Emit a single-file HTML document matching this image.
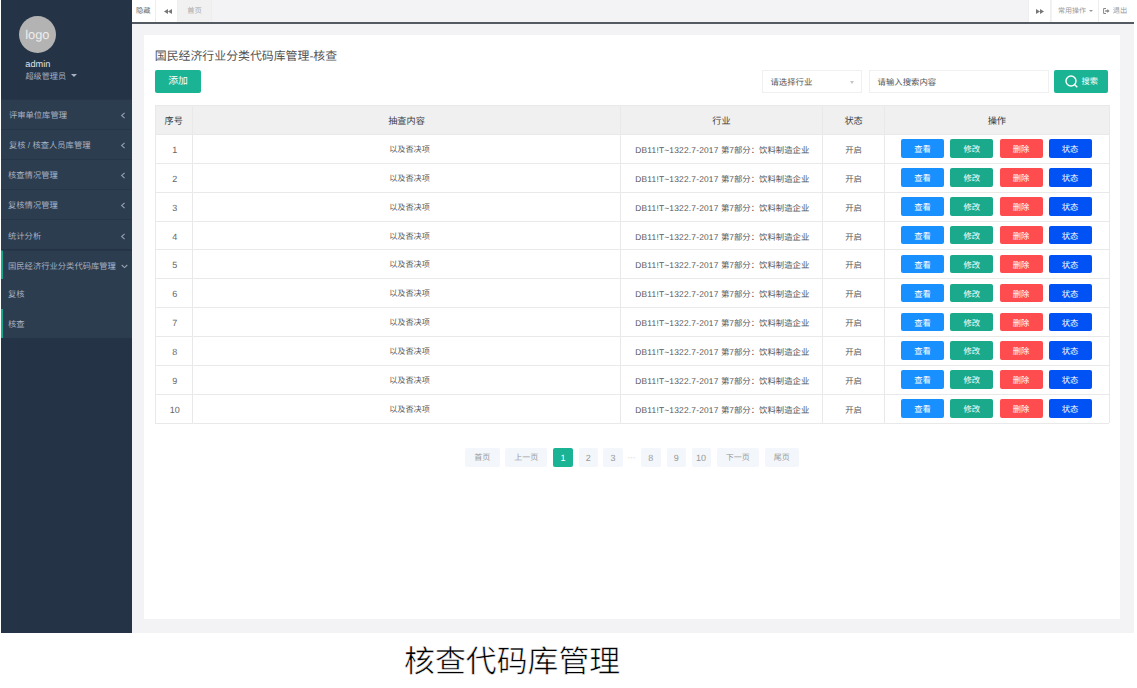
<!DOCTYPE html>
<html lang="zh-CN"><head><meta charset="utf-8">
<style>
*{margin:0;padding:0;box-sizing:border-box}
html,body{width:1137px;height:688px;overflow:hidden;background:#fff;font-family:"Liberation Sans",sans-serif;position:relative;text-rendering:geometricPrecision}
.abs{position:absolute;white-space:nowrap}
#side{left:1px;top:0;width:131px;height:633px;background:#243446}
#gray{left:132px;top:0;width:1002px;height:633px;background:#f3f3f5}
#hdr{left:132px;top:0;width:1002px;height:22px;background:#f3f3f5}
#hline{left:132px;top:22px;width:1002px;height:2px;background:#535a62}
.tab{position:absolute;white-space:nowrap;top:0;height:22px;background:#fff;border-right:1px solid #eee;color:#999;font-size:7.3px;line-height:22px;text-align:center}
#panel{left:144px;top:35.4px;width:976px;height:583.4px;background:#fff}
.cap{left:404px;top:642px;font-family:"Liberation Serif",serif;font-size:30.9px;color:#000;line-height:40px;letter-spacing:0px;-webkit-text-stroke:0.55px #fff}
.mi{position:absolute;white-space:nowrap;overflow:hidden;left:0;width:131px;background:#2c3d4f;border-top:1px solid #273749;color:#a7b1c2;font-size:8.3px;padding-left:7.9px;padding-top:1.3px}
.sub{border-top:none}
.act{border-left:2px solid #19aa8d;padding-left:5px}
.chev{position:absolute;right:6px}
.th{color:#3d3d3d;font-size:9.2px;text-align:center;padding-top:2px}
.td{color:#555;font-size:8.4px;text-align:center;white-space:nowrap;padding-top:1.5px}
.num{font-size:9px;color:#666}
.lat{letter-spacing:0.2px}
.c3{padding-left:1.6px}
.c2{font-size:8.1px;padding-left:6px}
.ob{width:43.2px;height:18.5px;line-height:18.5px;padding-top:1px;color:#fff;font-size:8.3px;text-align:center;border-radius:2px}
.pg{top:448px;height:18.7px;line-height:18.7px;padding-top:1px;font-size:8px;text-align:center;border-radius:2px}
.pgn{font-size:9px}
</style></head><body>
<div id="side" class="abs">
  <div class="abs" style="left:17.8px;top:16.1px;width:37px;height:37px;border-radius:50%;background:#b3b3b3;color:#eee;font-size:12.8px;line-height:37px;text-align:center">logo</div>
  <div class="abs" style="left:24.3px;top:57.5px;color:#dfe4ed;font-size:9.2px;line-height:12px">admin</div>
  <div class="abs" style="left:24.5px;top:70px;color:#a7b1c2;font-size:8.1px;line-height:13px">超级管理员</div>
  <div class="abs" style="left:69.6px;top:74.2px;width:0;height:0;border-left:3.2px solid transparent;border-right:3.2px solid transparent;border-top:3.6px solid #a7b1c2"></div>
  <div class="mi" style="top:98.5px;height:30.2px;line-height:28.9px">评审单位库管理<svg class="chev" style="top:12.3px" width="6" height="7" viewBox="0 0 6 7"><path d="M4.6 0.8 L1.6 3.5 L4.6 6.2" fill="none" stroke="#95a0b0" stroke-width="1.1"/></svg></div>
  <div class="mi" style="top:128.7px;height:30.2px;line-height:28.9px">复核 / 核查人员库管理<svg class="chev" style="top:12.3px" width="6" height="7" viewBox="0 0 6 7"><path d="M4.6 0.8 L1.6 3.5 L4.6 6.2" fill="none" stroke="#95a0b0" stroke-width="1.1"/></svg></div>
  <div class="mi" style="top:158.9px;height:30.2px;line-height:28.9px;padding-left:7px">核查情况管理<svg class="chev" style="top:12.3px" width="6" height="7" viewBox="0 0 6 7"><path d="M4.6 0.8 L1.6 3.5 L4.6 6.2" fill="none" stroke="#95a0b0" stroke-width="1.1"/></svg></div>
  <div class="mi" style="top:189.1px;height:30.2px;line-height:28.9px;padding-left:7px">复核情况管理<svg class="chev" style="top:12.3px" width="6" height="7" viewBox="0 0 6 7"><path d="M4.6 0.8 L1.6 3.5 L4.6 6.2" fill="none" stroke="#95a0b0" stroke-width="1.1"/></svg></div>
  <div class="mi" style="top:219.3px;height:30.2px;line-height:28.9px;padding-left:7px">统计分析<svg class="chev" style="top:12.3px" width="6" height="7" viewBox="0 0 6 7"><path d="M4.6 0.8 L1.6 3.5 L4.6 6.2" fill="none" stroke="#95a0b0" stroke-width="1.1"/></svg></div>
  <div class="mi act" style="top:249.5px;height:29.6px;line-height:28.3px">国民经济行业分类代码库管理<svg class="chev" style="top:13px;right:4.5px" width="7" height="5" viewBox="0 0 7 5"><path d="M0.7 1 L3.5 3.6 L6.3 1" fill="none" stroke="#95a0b0" stroke-width="1.1"/></svg></div>
  <div class="mi sub" style="top:279.1px;height:29.5px;line-height:28.5px;padding-left:7px">复核</div>
  <div class="mi sub act" style="top:308.6px;height:29.6px;line-height:28.5px">核查</div>
</div>
<div id="gray" class="abs"></div>
<div id="hdr" class="abs">
  <div class="tab" style="left:0;width:23.6px;color:#666">隐藏</div>
  <div class="tab" style="left:23.6px;width:22.4px"><svg style="position:absolute;left:8px;top:8.8px" width="8" height="5" viewBox="0 0 8 5"><path d="M4 0 L0 2.5 L4 5 Z M8 0 L4 2.5 L8 5 Z" fill="#777"/></svg></div>
  <div class="tab" style="left:46px;width:34px;background:#f1f1f1;color:#aaa">首页</div>
  <div class="tab" style="left:895.8px;width:23.6px;border-left:1px solid #eee"><svg style="position:absolute;left:6.8px;top:8.5px" width="8" height="5" viewBox="0 0 8 5"><path d="M0 0 L4 2.5 L0 5 Z M4 0 L8 2.5 L4 5 Z" fill="#777"/></svg></div>
  <div class="tab" style="left:919.5px;width:47.2px;text-align:left;padding-left:6.5px;padding-top:0.8px;font-size:7px">常用操作<span style="display:inline-block;margin-left:2.5px;vertical-align:1px;width:0;height:0;border-left:2.2px solid transparent;border-right:2.2px solid transparent;border-top:2.6px solid #999"></span></div>
  <div class="tab" style="left:966.7px;width:35.3px;border-right:none;text-align:left;padding-left:14px">退出<svg style="position:absolute;left:4.6px;top:7.8px" width="7" height="6" viewBox="0 0 7 6"><path d="M3 0.5 H0.6 V5.5 H3" fill="none" stroke="#888" stroke-width="1"/><path d="M2.2 2.3 H4.3 V1 L6.6 3 L4.3 5 V3.7 H2.2 Z" fill="#888"/></svg></div>
</div>
<div id="hline" class="abs"></div>
<div id="panel" class="abs"></div>
<div class="abs" style="left:154.8px;top:49px;font-size:11.9px;line-height:14px;color:#555">国民经济行业分类代码库管理-核查</div>
<div class="abs btn" style="left:155.1px;top:70px;width:46px;height:23px;background:#1ab394;color:#fff;font-size:9.8px;line-height:24px;text-align:center;border-radius:2px">添加</div>
<div class="abs" style="left:761.7px;top:69.5px;width:100.6px;height:23.6px;border:1px solid #f0f0f0;color:#555;font-size:8.4px;line-height:22.5px;padding-top:0.3px;padding-left:7.8px">请选择行业<span style="position:absolute;left:87.6px;top:10.3px;width:0;height:0;border-left:2.9px solid transparent;border-right:2.9px solid transparent;border-top:3px solid #c4c4c4"></span></div>
<div class="abs" style="left:868.6px;top:69.5px;width:180.8px;height:23.6px;border:1px solid #f0f0f0;color:#555;font-size:8.4px;line-height:22.5px;padding-top:0.3px;padding-left:8px">请输入搜索内容</div>
<div class="abs" style="left:1054px;top:70px;width:54.4px;height:22.8px;background:#1ab394;color:#fff;font-size:8.2px;line-height:23.5px;border-radius:2px;padding-left:27.5px">搜索<svg style="position:absolute;left:10.5px;top:5.3px" width="14" height="13" viewBox="0 0 14 13"><circle cx="6" cy="6" r="5" fill="none" stroke="#fff" stroke-width="1.4"/><path d="M9.5 9.5 L12.3 12.2" stroke="#fff" stroke-width="1.5"/></svg></div>
<div class="abs" style="left:155px;top:105px;width:954px;height:29.5px;background:#f0f0f0"></div>
<div class="abs th" style="left:155px;top:105px;width:37.5px;height:29.5px;line-height:29.5px">序号</div>
<div class="abs th" style="left:192.5px;top:105px;width:428.0px;height:29.5px;line-height:29.5px">抽查内容</div>
<div class="abs th" style="left:620.5px;top:105px;width:202.0px;height:29.5px;line-height:29.5px">行业</div>
<div class="abs th" style="left:822.5px;top:105px;width:62.200000000000045px;height:29.5px;line-height:29.5px">状态</div>
<div class="abs th" style="left:884.7px;top:105px;width:224.29999999999995px;height:29.5px;line-height:29.5px">操作</div>
<div class="abs td" style="left:156px;top:134.50px;width:37.5px;height:28.87px;line-height:28.87px"><span class="num">1</span></div>
<div class="abs td c2" style="left:192.5px;top:134.50px;width:428.0px;height:28.87px;line-height:28.87px">以及否决项</div>
<div class="abs td c3" style="left:620.5px;top:134.50px;width:202.0px;height:28.87px;line-height:28.87px"><span class="lat">DB11!T~1322.7-2017</span> 第7部分：饮料制造企业</div>
<div class="abs td" style="left:822.5px;top:134.50px;width:62.200000000000045px;height:28.87px;line-height:28.87px">开启</div>
<div class="abs ob" style="left:901px;top:139.30px;background:#1890ff">查看</div>
<div class="abs ob" style="left:950.2px;top:139.30px;background:#1ba98b">修改</div>
<div class="abs ob" style="left:999.5px;top:139.30px;background:#ff4d4f">删除</div>
<div class="abs ob" style="left:1048.5px;top:139.30px;background:#0052f5">状态</div>
<div class="abs td" style="left:156px;top:163.37px;width:37.5px;height:28.87px;line-height:28.87px"><span class="num">2</span></div>
<div class="abs td c2" style="left:192.5px;top:163.37px;width:428.0px;height:28.87px;line-height:28.87px">以及否决项</div>
<div class="abs td c3" style="left:620.5px;top:163.37px;width:202.0px;height:28.87px;line-height:28.87px"><span class="lat">DB11!T~1322.7-2017</span> 第7部分：饮料制造企业</div>
<div class="abs td" style="left:822.5px;top:163.37px;width:62.200000000000045px;height:28.87px;line-height:28.87px">开启</div>
<div class="abs ob" style="left:901px;top:168.17px;background:#1890ff">查看</div>
<div class="abs ob" style="left:950.2px;top:168.17px;background:#1ba98b">修改</div>
<div class="abs ob" style="left:999.5px;top:168.17px;background:#ff4d4f">删除</div>
<div class="abs ob" style="left:1048.5px;top:168.17px;background:#0052f5">状态</div>
<div class="abs td" style="left:156px;top:192.24px;width:37.5px;height:28.87px;line-height:28.87px"><span class="num">3</span></div>
<div class="abs td c2" style="left:192.5px;top:192.24px;width:428.0px;height:28.87px;line-height:28.87px">以及否决项</div>
<div class="abs td c3" style="left:620.5px;top:192.24px;width:202.0px;height:28.87px;line-height:28.87px"><span class="lat">DB11!T~1322.7-2017</span> 第7部分：饮料制造企业</div>
<div class="abs td" style="left:822.5px;top:192.24px;width:62.200000000000045px;height:28.87px;line-height:28.87px">开启</div>
<div class="abs ob" style="left:901px;top:197.04px;background:#1890ff">查看</div>
<div class="abs ob" style="left:950.2px;top:197.04px;background:#1ba98b">修改</div>
<div class="abs ob" style="left:999.5px;top:197.04px;background:#ff4d4f">删除</div>
<div class="abs ob" style="left:1048.5px;top:197.04px;background:#0052f5">状态</div>
<div class="abs td" style="left:156px;top:221.11px;width:37.5px;height:28.87px;line-height:28.87px"><span class="num">4</span></div>
<div class="abs td c2" style="left:192.5px;top:221.11px;width:428.0px;height:28.87px;line-height:28.87px">以及否决项</div>
<div class="abs td c3" style="left:620.5px;top:221.11px;width:202.0px;height:28.87px;line-height:28.87px"><span class="lat">DB11!T~1322.7-2017</span> 第7部分：饮料制造企业</div>
<div class="abs td" style="left:822.5px;top:221.11px;width:62.200000000000045px;height:28.87px;line-height:28.87px">开启</div>
<div class="abs ob" style="left:901px;top:225.91px;background:#1890ff">查看</div>
<div class="abs ob" style="left:950.2px;top:225.91px;background:#1ba98b">修改</div>
<div class="abs ob" style="left:999.5px;top:225.91px;background:#ff4d4f">删除</div>
<div class="abs ob" style="left:1048.5px;top:225.91px;background:#0052f5">状态</div>
<div class="abs td" style="left:156px;top:249.98px;width:37.5px;height:28.87px;line-height:28.87px"><span class="num">5</span></div>
<div class="abs td c2" style="left:192.5px;top:249.98px;width:428.0px;height:28.87px;line-height:28.87px">以及否决项</div>
<div class="abs td c3" style="left:620.5px;top:249.98px;width:202.0px;height:28.87px;line-height:28.87px"><span class="lat">DB11!T~1322.7-2017</span> 第7部分：饮料制造企业</div>
<div class="abs td" style="left:822.5px;top:249.98px;width:62.200000000000045px;height:28.87px;line-height:28.87px">开启</div>
<div class="abs ob" style="left:901px;top:254.78px;background:#1890ff">查看</div>
<div class="abs ob" style="left:950.2px;top:254.78px;background:#1ba98b">修改</div>
<div class="abs ob" style="left:999.5px;top:254.78px;background:#ff4d4f">删除</div>
<div class="abs ob" style="left:1048.5px;top:254.78px;background:#0052f5">状态</div>
<div class="abs td" style="left:156px;top:278.85px;width:37.5px;height:28.87px;line-height:28.87px"><span class="num">6</span></div>
<div class="abs td c2" style="left:192.5px;top:278.85px;width:428.0px;height:28.87px;line-height:28.87px">以及否决项</div>
<div class="abs td c3" style="left:620.5px;top:278.85px;width:202.0px;height:28.87px;line-height:28.87px"><span class="lat">DB11!T~1322.7-2017</span> 第7部分：饮料制造企业</div>
<div class="abs td" style="left:822.5px;top:278.85px;width:62.200000000000045px;height:28.87px;line-height:28.87px">开启</div>
<div class="abs ob" style="left:901px;top:283.65px;background:#1890ff">查看</div>
<div class="abs ob" style="left:950.2px;top:283.65px;background:#1ba98b">修改</div>
<div class="abs ob" style="left:999.5px;top:283.65px;background:#ff4d4f">删除</div>
<div class="abs ob" style="left:1048.5px;top:283.65px;background:#0052f5">状态</div>
<div class="abs td" style="left:156px;top:307.72px;width:37.5px;height:28.87px;line-height:28.87px"><span class="num">7</span></div>
<div class="abs td c2" style="left:192.5px;top:307.72px;width:428.0px;height:28.87px;line-height:28.87px">以及否决项</div>
<div class="abs td c3" style="left:620.5px;top:307.72px;width:202.0px;height:28.87px;line-height:28.87px"><span class="lat">DB11!T~1322.7-2017</span> 第7部分：饮料制造企业</div>
<div class="abs td" style="left:822.5px;top:307.72px;width:62.200000000000045px;height:28.87px;line-height:28.87px">开启</div>
<div class="abs ob" style="left:901px;top:312.52px;background:#1890ff">查看</div>
<div class="abs ob" style="left:950.2px;top:312.52px;background:#1ba98b">修改</div>
<div class="abs ob" style="left:999.5px;top:312.52px;background:#ff4d4f">删除</div>
<div class="abs ob" style="left:1048.5px;top:312.52px;background:#0052f5">状态</div>
<div class="abs td" style="left:156px;top:336.59px;width:37.5px;height:28.87px;line-height:28.87px"><span class="num">8</span></div>
<div class="abs td c2" style="left:192.5px;top:336.59px;width:428.0px;height:28.87px;line-height:28.87px">以及否决项</div>
<div class="abs td c3" style="left:620.5px;top:336.59px;width:202.0px;height:28.87px;line-height:28.87px"><span class="lat">DB11!T~1322.7-2017</span> 第7部分：饮料制造企业</div>
<div class="abs td" style="left:822.5px;top:336.59px;width:62.200000000000045px;height:28.87px;line-height:28.87px">开启</div>
<div class="abs ob" style="left:901px;top:341.39px;background:#1890ff">查看</div>
<div class="abs ob" style="left:950.2px;top:341.39px;background:#1ba98b">修改</div>
<div class="abs ob" style="left:999.5px;top:341.39px;background:#ff4d4f">删除</div>
<div class="abs ob" style="left:1048.5px;top:341.39px;background:#0052f5">状态</div>
<div class="abs td" style="left:156px;top:365.46px;width:37.5px;height:28.87px;line-height:28.87px"><span class="num">9</span></div>
<div class="abs td c2" style="left:192.5px;top:365.46px;width:428.0px;height:28.87px;line-height:28.87px">以及否决项</div>
<div class="abs td c3" style="left:620.5px;top:365.46px;width:202.0px;height:28.87px;line-height:28.87px"><span class="lat">DB11!T~1322.7-2017</span> 第7部分：饮料制造企业</div>
<div class="abs td" style="left:822.5px;top:365.46px;width:62.200000000000045px;height:28.87px;line-height:28.87px">开启</div>
<div class="abs ob" style="left:901px;top:370.26px;background:#1890ff">查看</div>
<div class="abs ob" style="left:950.2px;top:370.26px;background:#1ba98b">修改</div>
<div class="abs ob" style="left:999.5px;top:370.26px;background:#ff4d4f">删除</div>
<div class="abs ob" style="left:1048.5px;top:370.26px;background:#0052f5">状态</div>
<div class="abs td" style="left:156px;top:394.33px;width:37.5px;height:28.87px;line-height:28.87px"><span class="num">10</span></div>
<div class="abs td c2" style="left:192.5px;top:394.33px;width:428.0px;height:28.87px;line-height:28.87px">以及否决项</div>
<div class="abs td c3" style="left:620.5px;top:394.33px;width:202.0px;height:28.87px;line-height:28.87px"><span class="lat">DB11!T~1322.7-2017</span> 第7部分：饮料制造企业</div>
<div class="abs td" style="left:822.5px;top:394.33px;width:62.200000000000045px;height:28.87px;line-height:28.87px">开启</div>
<div class="abs ob" style="left:901px;top:399.13px;background:#1890ff">查看</div>
<div class="abs ob" style="left:950.2px;top:399.13px;background:#1ba98b">修改</div>
<div class="abs ob" style="left:999.5px;top:399.13px;background:#ff4d4f">删除</div>
<div class="abs ob" style="left:1048.5px;top:399.13px;background:#0052f5">状态</div>
<div class="abs" style="left:155px;top:104.50px;width:954px;height:1px;background:#e9e9e9"></div>
<div class="abs" style="left:155px;top:134.00px;width:954px;height:1px;background:#e9e9e9"></div>
<div class="abs" style="left:155px;top:162.87px;width:954px;height:1px;background:#e9e9e9"></div>
<div class="abs" style="left:155px;top:191.74px;width:954px;height:1px;background:#e9e9e9"></div>
<div class="abs" style="left:155px;top:220.61px;width:954px;height:1px;background:#e9e9e9"></div>
<div class="abs" style="left:155px;top:249.48px;width:954px;height:1px;background:#e9e9e9"></div>
<div class="abs" style="left:155px;top:278.35px;width:954px;height:1px;background:#e9e9e9"></div>
<div class="abs" style="left:155px;top:307.22px;width:954px;height:1px;background:#e9e9e9"></div>
<div class="abs" style="left:155px;top:336.09px;width:954px;height:1px;background:#e9e9e9"></div>
<div class="abs" style="left:155px;top:364.96px;width:954px;height:1px;background:#e9e9e9"></div>
<div class="abs" style="left:155px;top:393.83px;width:954px;height:1px;background:#e9e9e9"></div>
<div class="abs" style="left:155px;top:422.70px;width:954px;height:1px;background:#e9e9e9"></div>
<div class="abs" style="left:154.5px;top:105px;width:1px;height:318.20px;background:#e9e9e9"></div>
<div class="abs" style="left:192.0px;top:105px;width:1px;height:318.20px;background:#e9e9e9"></div>
<div class="abs" style="left:620.0px;top:105px;width:1px;height:318.20px;background:#e9e9e9"></div>
<div class="abs" style="left:822.0px;top:105px;width:1px;height:318.20px;background:#e9e9e9"></div>
<div class="abs" style="left:884.2px;top:105px;width:1px;height:318.20px;background:#e9e9e9"></div>
<div class="abs" style="left:1108.5px;top:105px;width:1px;height:318.20px;background:#e9e9e9"></div>
<div class="abs pg" style="left:465px;width:34.6px;background:#f3f6fa;color:#999">首页</div>
<div class="abs pg" style="left:505.1px;width:42.4px;background:#f3f6fa;color:#999">上一页</div>
<div class="abs pg pgn" style="left:553.1px;width:19.6px;background:#1ab394;color:#fff">1</div>
<div class="abs pg pgn" style="left:578.7px;width:19.3px;background:#f3f6fa;color:#999">2</div>
<div class="abs pg pgn" style="left:603.3px;width:19.4px;background:#f3f6fa;color:#999">3</div>
<div class="abs pg pgn" style="left:640.9px;width:19.7px;background:#f3f6fa;color:#999">8</div>
<div class="abs pg pgn" style="left:666.5px;width:19.5px;background:#f3f6fa;color:#999">9</div>
<div class="abs pg pgn" style="left:691.5px;width:19.2px;background:#f3f6fa;color:#999">10</div>
<div class="abs pg" style="left:716.9px;width:41.8px;background:#f3f6fa;color:#999">下一页</div>
<div class="abs pg" style="left:764.6px;width:34.2px;background:#f3f6fa;color:#999">尾页</div>
<div class="abs" style="left:627px;top:449px;width:9px;height:19px;line-height:18px;color:#bbb;font-size:8px;text-align:center">···</div>
<div class="abs cap">核查代码库管理</div>
</body></html>
